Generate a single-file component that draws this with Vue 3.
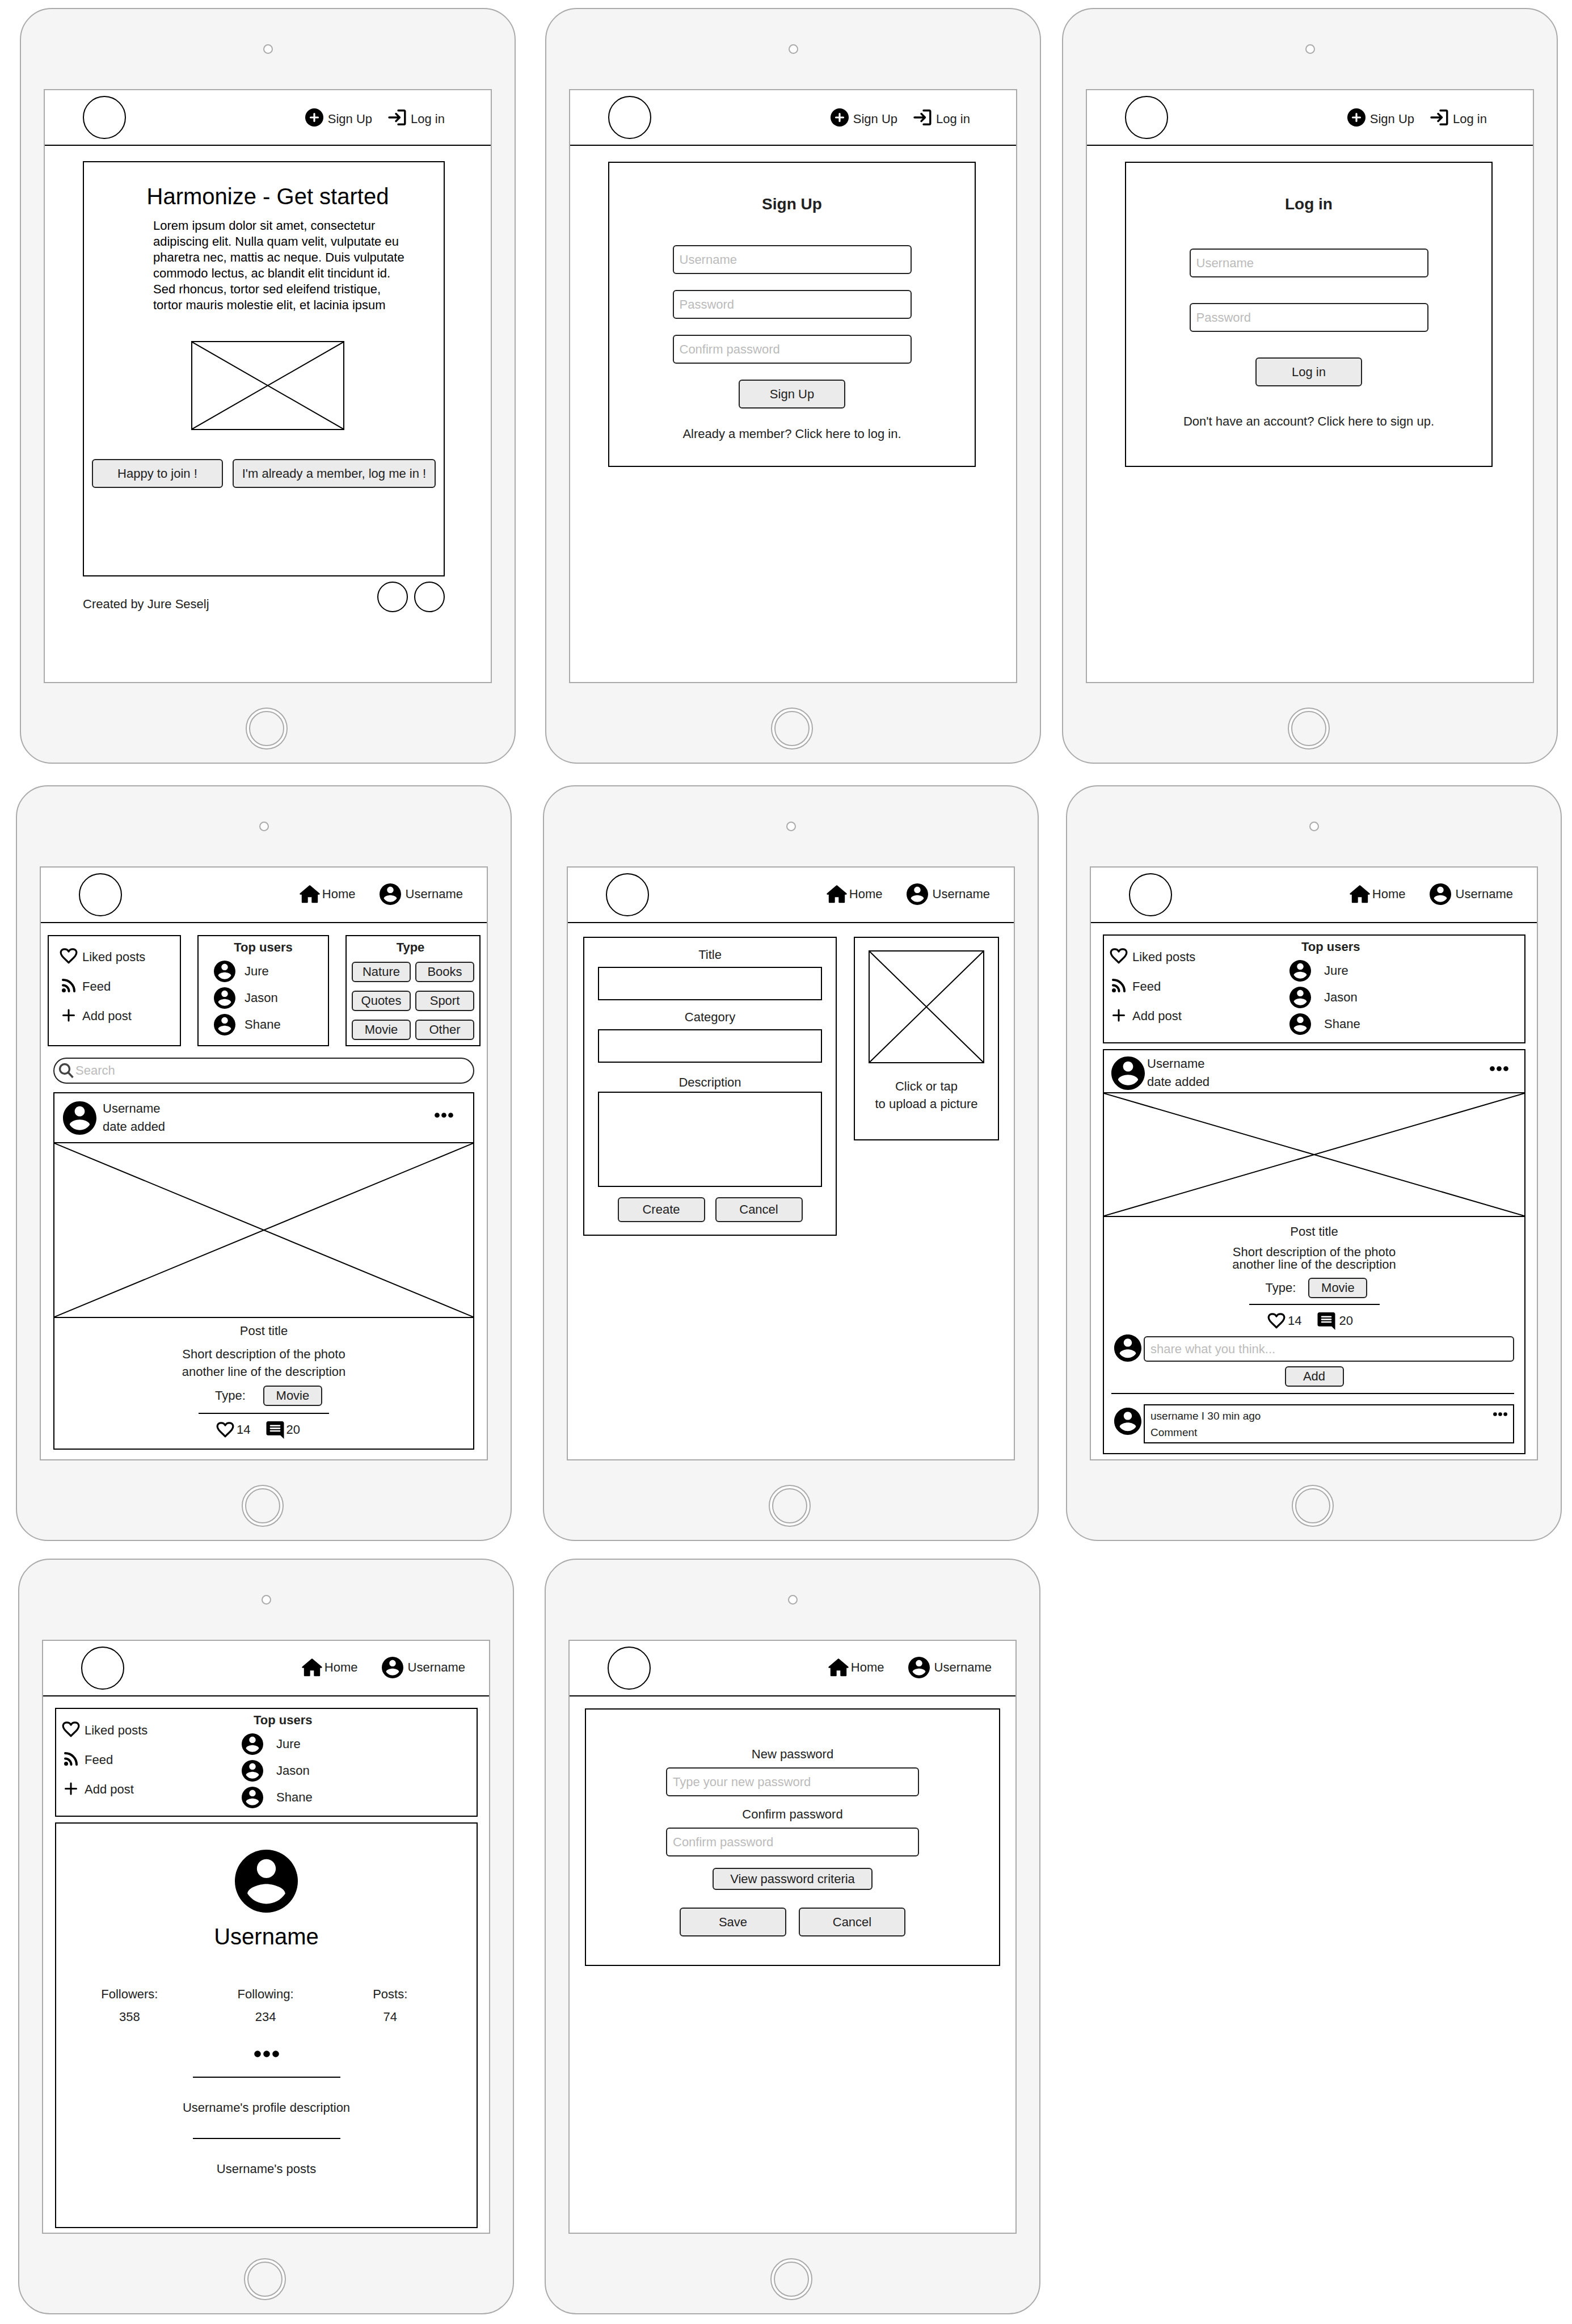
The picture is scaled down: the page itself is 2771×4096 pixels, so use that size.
<script setup>
const rows = [
  ['landing', 'signup', 'login'],
  ['feed', 'create', 'post'],
  ['profile', 'password'],
]

const guestScreens = ['landing', 'signup', 'login']
const menu = [
  { icon: 'heart', label: 'Liked posts' },
  { icon: 'feed', label: 'Feed' },
  { icon: 'plus', label: 'Add post' },
]
const topUsers = ['Jure', 'Jason', 'Shane']
const types = ['Nature', 'Books', 'Quotes', 'Sport', 'Movie', 'Other']
const signupFields = [
  { label: 'Username', type: 'text' },
  { label: 'Password', type: 'password' },
  { label: 'Confirm password', type: 'password' },
]
const loginFields = signupFields.slice(0, 2)
const stats = [
  { label: 'Followers:', value: '358' },
  { label: 'Following:', value: '234' },
  { label: 'Posts:', value: '74' },
]
</script>

<template>
  <svg class="symbols" aria-hidden="true">
    <symbol id="i-add" viewBox="0 0 32 32">
      <circle cx="16" cy="16" r="16" fill="#000" />
      <path d="M16 9.5v13M9.5 16h13" stroke="#fff" stroke-width="3.2" stroke-linecap="round" />
    </symbol>
    <symbol id="i-login" viewBox="0 0 32 28">
      <path d="M2 14h18M14 7.5l6.5 6.5-6.5 6.500M18 1.800h10q1.800 0 1.800 1.800v20.800q0 1.800-1.800 1.800h-10" fill="none" stroke="#000" stroke-width="3.400" stroke-linecap="round" stroke-linejoin="round" />
    </symbol>
    <symbol id="i-home" viewBox="0 0 36 32">
      <path d="M18 1.500L34.500 15.500H31V30H22.500V20H13.500V30H5V15.500H1.500Z" fill="#000" stroke="#000" stroke-width="2.400" stroke-linejoin="round" />
    </symbol>
    <symbol id="i-user" viewBox="2 2 20 20">
      <path d="M12 2C6.480 2 2 6.480 2 12s4.480 10 10 10 10-4.480 10-10S17.520 2 12 2zm0 3c1.660 0 3 1.340 3 3s-1.340 3-3 3-3-1.340-3-3 1.340-3 3-3zm0 14.200c-2.500 0-4.710-1.280-6-3.220.03-1.990 4-3.080 6-3.080 1.990 0 5.970 1.090 6 3.080-1.290 1.940-3.500 3.220-6 3.220z" />
    </symbol>
    <symbol id="i-heart" viewBox="0 0 32 28">
      <path d="M16 25.800C12.500 21.500 8 18.500 4.500 14C0 8 2.500 1.800 8.800 1.800C12.300 1.800 14.800 3.600 16 6.200C17.200 3.600 19.700 1.800 23.200 1.800C29.500 1.800 32 8 27.500 14C24 18.500 19.500 21.500 16 25.800Z" fill="none" stroke="#000" stroke-width="3.200" stroke-linejoin="round" />
    </symbol>
    <symbol id="i-feed" viewBox="0 0 32 28">
      <circle cx="7.500" cy="22.500" r="3.500" />
      <path d="M6 13.500A10.500 10.500 0 0 1 16.500 24M6 4A20 20 0 0 1 26 24" fill="none" stroke="#000" stroke-width="4" stroke-linecap="round" />
    </symbol>
    <symbol id="i-plus" viewBox="0 0 32 28">
      <path d="M16 5v19M6.500 14.500h19" stroke="#000" stroke-width="3" stroke-linecap="round" />
    </symbol>
    <symbol id="i-comment" viewBox="2 2 20 20">
      <path d="M21.990 4c0-1.100-.89-2-1.990-2H4c-1.100 0-2 .9-2 2v12c0 1.100.9 2 2 2h14l4 4-.01-18z" />
      <path d="M6.800 7h10.400M6.800 10h10.400M6.800 13h10.400" stroke="#fff" stroke-width="1.700" stroke-linecap="round" />
    </symbol>
    <symbol id="i-search" viewBox="0 0 28 28">
      <path d="M11 2.500a8.500 8.500 0 1 0 0 17a8.500 8.500 0 1 0 0-17M17.500 17.500L25.500 26" fill="none" stroke="#444" stroke-width="3.400" />
    </symbol>
    <symbol id="i-dots" viewBox="0 0 44 12">
      <circle cx="6" cy="6" r="5.800" /><circle cx="22" cy="6" r="5.800" /><circle cx="38" cy="6" r="5.800" />
    </symbol>
  </svg>

  <main class="board">
    <section v-for="(row, r) in rows" :key="r" class="row" :class="`row-${r + 1}`">
      <article v-for="name in row" :key="name" class="device">
        <div class="bezel-top"><span class="camera"></span></div>

        <div class="screen">
          <header class="bar">
            <a href="#" class="logo" aria-label="Start"></a>
            <nav v-if="guestScreens.includes(name)" class="nav guest">
              <a href="#"><svg class="ic-add"><use href="#i-add" /></svg><span>Sign Up</span></a>
              <a href="#"><svg class="ic-login"><use href="#i-login" /></svg><span>Log in</span></a>
            </nav>
            <nav v-else class="nav member">
              <a href="#" class="home"><svg class="ic-home"><use href="#i-home" /></svg><span>Home</span></a>
              <a href="#" class="me"><svg class="ic-me"><use href="#i-user" /></svg><span>Username</span></a>
            </nav>
          </header>

          <!-- Landing -->
          <div v-if="name === 'landing'" class="content landing">
            <section class="frame hero">
              <div class="intro">
                <h1>Harmonize - Get started</h1>
                <p class="lorem">
                  Lorem ipsum dolor sit amet, consectetur adipiscing elit. Nulla quam velit, vulputate eu
                  pharetra nec, mattis ac neque. Duis vulputate commodo lectus, ac blandit elit tincidunt id.
                  Sed rhoncus, tortor sed eleifend tristique, tortor mauris molestie elit, et lacinia ipsum
                </p>
                <svg class="picture hero-picture" viewBox="0 0 100 100" preserveAspectRatio="none">
                  <path d="M0 0L100 100M100 0L0 100" />
                </svg>
              </div>
              <div class="hero-actions">
                <button type="button" class="btn join">Happy to join !</button>
                <button type="button" class="btn back">I'm already a member, log me in !</button>
              </div>
            </section>
            <footer class="foot">
              <span>Created by Jure Seselj</span>
              <div class="social"><a href="#" aria-label="Profile one"></a><a href="#" aria-label="Profile two"></a></div>
            </footer>
          </div>

          <!-- Sign up -->
          <div v-else-if="name === 'signup'" class="content auth">
            <form class="frame auth-form signup-form" @submit.prevent>
              <h2>Sign Up</h2>
              <input v-for="f in signupFields" :key="f.label" class="field" :type="f.type" :placeholder="f.label" :aria-label="f.label" />
              <button class="btn wide">Sign Up</button>
              <a href="#" class="hint">Already a member? Click here to log in.</a>
            </form>
          </div>

          <!-- Log in -->
          <div v-else-if="name === 'login'" class="content auth">
            <form class="frame auth-form login-form" @submit.prevent>
              <h2>Log in</h2>
              <input v-for="f in loginFields" :key="f.label" class="field" :type="f.type" :placeholder="f.label" :aria-label="f.label" />
              <button class="btn wide">Log in</button>
              <a href="#" class="hint">Don't have an account? Click here to sign up.</a>
            </form>
          </div>

          <!-- Feed -->
          <div v-else-if="name === 'feed'" class="content feed">
            <div class="cards">
              <ul class="frame menu">
                <li v-for="m in menu" :key="m.label">
                  <a href="#"><svg class="ic-menu"><use :href="`#i-${m.icon}`" /></svg><span>{{ m.label }}</span></a>
                </li>
              </ul>
              <section class="frame users">
                <h3>Top users</h3>
                <a v-for="u in topUsers" :key="u" href="#" class="user"><svg class="ic-user"><use href="#i-user" /></svg>{{ u }}</a>
              </section>
              <section class="frame types">
                <h3>Type</h3>
                <div class="type-grid">
                  <button v-for="t in types" :key="t" type="button" class="btn chip">{{ t }}</button>
                </div>
              </section>
            </div>
            <label class="search">
              <svg class="ic-search"><use href="#i-search" /></svg>
              <input type="search" placeholder="Search" aria-label="Search" />
            </label>
            <article class="frame post">
              <header class="post-head">
                <svg class="ic-author"><use href="#i-user" /></svg>
                <p>Username<br />date added</p>
                <button type="button" class="more" aria-label="More"><svg class="ic-dots"><use href="#i-dots" /></svg></button>
              </header>
              <svg class="picture post-picture" viewBox="0 0 100 100" preserveAspectRatio="none"><path d="M0 0L100 100M100 0L0 100" /></svg>
              <div class="post-body">
                <h4>Post title</h4>
                <p class="desc">Short description of the photo<br />another line of the description</p>
                <div class="type-row"><span>Type:</span><button type="button" class="btn chip">Movie</button></div>
                <hr class="rule" />
                <div class="reactions">
                  <span><svg class="ic-heart"><use href="#i-heart" /></svg>14</span>
                  <span><svg class="ic-comment"><use href="#i-comment" /></svg>20</span>
                </div>
              </div>
            </article>
          </div>

          <!-- Create post -->
          <div v-else-if="name === 'create'" class="content create">
            <form class="frame create-form" @submit.prevent>
              <label for="post-title">Title</label>
              <input id="post-title" class="plain" type="text" />
              <label for="post-category">Category</label>
              <input id="post-category" class="plain" type="text" />
              <label for="post-description">Description</label>
              <textarea id="post-description" class="plain"></textarea>
              <div class="create-actions">
                <button class="btn">Create</button>
                <button type="button" class="btn">Cancel</button>
              </div>
            </form>
            <section class="frame upload">
              <svg class="picture upload-picture" viewBox="0 0 100 100" preserveAspectRatio="none"><path d="M0 0L100 100M100 0L0 100" /></svg>
              <p>Click or tap<br />to upload a picture</p>
            </section>
          </div>

          <!-- Change password -->
          <div v-else-if="name === 'password'" class="content pass">
            <form class="frame pass-form" @submit.prevent>
              <label for="new-pass">New password</label>
              <input id="new-pass" class="field" type="password" placeholder="Type your new password" />
              <label for="confirm-pass">Confirm password</label>
              <input id="confirm-pass" class="field" type="password" placeholder="Confirm password" />
              <button type="button" class="btn criteria">View password criteria</button>
              <div class="pass-actions">
                <button class="btn wide">Save</button>
                <button type="button" class="btn wide">Cancel</button>
              </div>
            </form>
          </div>

          <!-- Single post and profile share the top panel -->
          <div v-else class="content detail">
            <div class="frame panel">
              <ul class="menu">
                <li v-for="m in menu" :key="m.label">
                  <a href="#"><svg class="ic-menu"><use :href="`#i-${m.icon}`" /></svg><span>{{ m.label }}</span></a>
                </li>
              </ul>
              <section class="users">
                <h3>Top users</h3>
                <a v-for="u in topUsers" :key="u" href="#" class="user"><svg class="ic-user"><use href="#i-user" /></svg>{{ u }}</a>
              </section>
            </div>

            <article v-if="name === 'post'" class="frame post single">
              <header class="post-head">
                <svg class="ic-author"><use href="#i-user" /></svg>
                <p>Username<br />date added</p>
                <button type="button" class="more" aria-label="More"><svg class="ic-dots"><use href="#i-dots" /></svg></button>
              </header>
              <svg class="picture post-picture" viewBox="0 0 100 100" preserveAspectRatio="none"><path d="M0 0L100 100M100 0L0 100" /></svg>
              <div class="post-body">
                <h4>Post title</h4>
                <p class="desc">Short description of the photo<br />another line of the description</p>
                <div class="type-row"><span>Type:</span><button type="button" class="btn chip">Movie</button></div>
                <hr class="rule" />
                <div class="reactions">
                  <span><svg class="ic-heart"><use href="#i-heart" /></svg>14</span>
                  <span><svg class="ic-comment"><use href="#i-comment" /></svg>20</span>
                </div>
              </div>
              <form class="reply" @submit.prevent>
                <div class="reply-row">
                  <svg class="ic-reply"><use href="#i-user" /></svg>
                  <input class="field" type="text" placeholder="share what you think..." aria-label="Comment" />
                </div>
                <button class="btn chip">Add</button>
              </form>
              <hr class="long-rule" />
              <div class="comment">
                <svg class="ic-reply"><use href="#i-user" /></svg>
                <div class="frame comment-box">
                  <p>username I 30 min ago<br />Comment</p>
                  <button type="button" class="more" aria-label="More"><svg class="ic-dots"><use href="#i-dots" /></svg></button>
                </div>
              </div>
            </article>

            <section v-else class="frame profile">
              <svg class="ic-profile"><use href="#i-user" /></svg>
              <h1>Username</h1>
              <dl class="stats">
                <div v-for="s in stats" :key="s.label"><dt>{{ s.label }}</dt><dd>{{ s.value }}</dd></div>
              </dl>
              <button type="button" class="more" aria-label="More"><svg class="ic-dots"><use href="#i-dots" /></svg></button>
              <hr />
              <p>Username's profile description</p>
              <hr />
              <p>Username's posts</p>
            </section>
          </div>
        </div>

        <div class="bezel-bottom"><button type="button" class="home-button" aria-label="Home button"><span></span></button></div>
      </article>
    </section>
  </main>
</template>

<style>
body {
  margin: 0;
  background: #fff;
}
</style>

<style scoped>
.board,
.board * {
  box-sizing: border-box;
}

.symbols {
  display: none;
}

.board {
  display: flex;
  flex-direction: column;
  padding: 14px 0 17px;
  font-family: "Liberation Sans", Arial, Helvetica, sans-serif;
  font-size: 22px;
  line-height: 28px;
  color: #222;
}

h1, h2, h3, h4, p, ul, dl, dd {
  margin: 0;
  padding: 0;
}

h1 {
  font-size: 40px;
  line-height: 44px;
  font-weight: 400;
  color: #000;
}

h2 {
  font-size: 28px;
  line-height: 32px;
}

h3 {
  font-size: 22px;
}

h4 {
  font-size: 22px;
  font-weight: 400;
}

ul {
  list-style: none;
}

a {
  color: inherit;
  text-decoration: none;
}

hr {
  margin: 0;
  border: 0;
  border-top: 2px solid #000;
}

svg {
  display: block;
  flex: none;
}

button,
input,
textarea {
  font: inherit;
  color: inherit;
}

/* Board rows */
.row {
  display: grid;
  align-items: start;
}

.row-1 {
  grid-template-columns: 1fr 52px 1fr 37px 1fr;
  padding: 0 25px 38px 35px;
}

.row-2 {
  grid-template-columns: 1fr 55px 1fr 48px 1fr;
  padding: 0 18px 31px 28px;
}

.row-3 {
  grid-template-columns: 1fr 54px 1fr 48px 1fr;
  padding: 0 15px 0 32px;
}

.device:nth-child(2) {
  grid-column: 3;
}

.device:nth-child(3) {
  grid-column: 5;
}

/* Tablet */
.device {
  min-width: 0;
  padding: 0 40px;
  border: 2px solid #aaa;
  border-radius: 56px;
  background: #f5f5f5;
}

.bezel-top {
  display: flex;
  align-items: center;
  justify-content: center;
  height: 141px;
}

.camera {
  width: 17px;
  height: 17px;
  border: 2px solid #aaa;
  border-radius: 50%;
  background: #fff;
}

.screen {
  aspect-ratio: 790 / 1047;
  border: 2px solid #aaa;
  background: #fff;
}

.bezel-bottom {
  display: flex;
  justify-content: center;
  height: 140px;
  padding: 43px 4px 0 0;
}

.home-button {
  width: 74px;
  height: 74px;
  padding: 4px;
  border: 2px solid #aaa;
  border-radius: 50%;
  background: #fff;
}

.home-button span {
  display: block;
  height: 100%;
  border: 2px solid #aaa;
  border-radius: 50%;
  background: #f5f5f5;
}

/* Top bar */
.bar {
  display: flex;
  align-items: center;
  justify-content: space-between;
  height: 98px;
  padding-left: 67px;
  border-bottom: 2px solid #000;
}

.logo {
  width: 76px;
  height: 76px;
  border: 2px solid #000;
  border-radius: 50%;
}

.nav,
.nav a {
  display: flex;
  align-items: center;
}

.guest {
  gap: 28px;
  padding-right: 81px;
}

.guest a {
  gap: 8px;
}

.guest span {
  padding-top: 5px;
}

.member {
  gap: 42px;
  padding: 0 42px 3px 0;
}

.home {
  gap: 4px;
}

.me {
  gap: 8px;
}

.ic-add {
  width: 32px;
  height: 32px;
}

.ic-login {
  width: 32px;
  height: 28px;
}

.ic-home {
  width: 36px;
  height: 32px;
}

.ic-me,
.ic-user {
  width: 38px;
  height: 38px;
}

/* Shared pieces */
.frame {
  border: 2px solid #000;
}

.btn {
  height: 51px;
  padding: 0;
  border: 2px solid #222;
  border-radius: 6px;
  background: #ebebeb;
}

.wide {
  width: 188px;
}

.chip {
  width: 104px;
  height: 36px;
}

.field {
  height: 51px;
  padding: 0 10px;
  border: 2px solid #222;
  border-radius: 6px;
  background: #fff;
}

.field::placeholder,
.search input::placeholder {
  color: #bbb;
  opacity: 1;
}

.picture {
  border: 2px solid #000;
}

.picture path {
  fill: none;
  stroke: #000;
  stroke-width: 2px;
  vector-effect: non-scaling-stroke;
}

.more {
  padding: 0;
  border: 0;
  background: none;
}

/* Landing */
.landing {
  padding: 27px 81px 0 67px;
}

.hero {
  padding: 38px 14px 154px;
}

.intro {
  display: flex;
  flex-direction: column;
  align-items: center;
  padding-left: 14px;
}

.lorem {
  align-self: flex-start;
  width: 450px;
  margin: 16px 0 49px 94px;
  color: #000;
}

.hero-picture {
  width: 270px;
  height: 157px;
}

.hero-actions {
  display: flex;
  gap: 17px;
  margin-top: 51px;
}

.join {
  flex: 230;
}

.back {
  flex: 359;
}

.foot {
  display: flex;
  align-items: flex-end;
  justify-content: space-between;
  padding-top: 9px;
}

.social {
  display: flex;
  gap: 11px;
}

.social a {
  width: 54px;
  height: 54px;
  border: 2px solid #000;
  border-radius: 50%;
}

/* Sign up and log in */
.auth {
  padding: 28px 71px 0 67px;
}

.auth-form {
  display: flex;
  flex-direction: column;
  align-items: center;
  padding-top: 57px;
}

.auth-form .field {
  width: 421px;
}

.hint {
  margin-top: 3px;
}

.signup-form {
  gap: 28px;
  padding-bottom: 42px;
}

.signup-form h2 {
  margin-bottom: 28px;
}

.login-form {
  gap: 45px;
  padding-bottom: 64px;
}

.login-form h2 {
  margin-bottom: 17px;
}

/* Menu and top users */
.menu li + li {
  margin-top: 20px;
}

.menu a {
  display: flex;
  align-items: center;
  gap: 8px;
}

.menu span {
  padding-top: 4px;
}

.ic-menu {
  width: 32px;
  height: 28px;
}

.users {
  display: flex;
  flex-direction: column;
  gap: 9px;
  padding-top: 6px;
}

.user {
  display: flex;
  align-items: center;
  gap: 16px;
}

/* Feed */
.feed {
  padding: 21px 11px 0 12px;
}

.cards {
  display: grid;
  grid-template-columns: 235fr 232fr 238fr;
  gap: 29px;
  height: 196px;
}

.cards .menu {
  padding: 19px 0 0 19px;
}

.cards .users {
  padding-left: 27px;
}

.cards .users h3 {
  padding-right: 27px;
  text-align: center;
}

.types {
  padding: 6px 9px 0;
}

.types h3 {
  padding-right: 9px;
  text-align: center;
}

.type-grid {
  display: grid;
  grid-template-columns: 1fr 1fr;
  gap: 15px 8px;
  margin-top: 11px;
}

.type-grid .chip {
  width: auto;
}

.search {
  display: flex;
  align-items: center;
  gap: 2px;
  height: 46px;
  margin: 20px 11px 15px 10px;
  padding-left: 7px;
  border: 2px solid #222;
  border-radius: 23px;
}

.search input {
  flex: 1;
  min-width: 0;
  padding: 0;
  border: 0;
  outline: 0;
  background: none;
}

.ic-search {
  width: 28px;
  height: 28px;
}

/* Post */
.feed .post {
  margin: 0 11px 0 10px;
  padding-bottom: 17px;
}

.post-head {
  display: flex;
  align-items: center;
  height: 86px;
  padding: 0 35px 0 15px;
}

.post-head p {
  margin-left: 11px;
  line-height: 32px;
}

.post-head .more {
  margin: 0 0 10px auto;
}

.ic-author {
  width: 59px;
  height: 59px;
}

.ic-dots {
  width: 33px;
  height: 9px;
}

.post-picture {
  width: 100%;
  height: 310px;
  border-width: 2px 0;
}

.post-body {
  display: flex;
  flex-direction: column;
  align-items: center;
  padding-top: 9px;
}

.desc {
  margin: 11px 0 9px;
  line-height: 31px;
  text-align: center;
}

.type-row {
  display: flex;
  align-items: center;
  gap: 31px;
  padding-left: 17px;
}

.rule {
  width: 230px;
  margin: 12px 0;
}

.reactions {
  display: flex;
  gap: 27px;
  padding-right: 20px;
}

.reactions span {
  display: flex;
  align-items: center;
  gap: 4px;
  height: 32px;
}

.ic-heart {
  width: 32px;
  height: 28px;
}

.ic-comment {
  width: 32px;
  height: 31px;
}

/* Create post */
.create {
  display: grid;
  grid-template-columns: 447fr 256fr;
  align-items: start;
  gap: 30px;
  padding: 24px 26px 0 27px;
}

.create-form {
  display: flex;
  flex-direction: column;
  padding: 16px 24px 22px;
  text-align: center;
}

.plain {
  height: 59px;
  padding: 0 10px;
  border: 2px solid #000;
  border-radius: 0;
  background: #fff;
}

input.plain {
  margin: 7px 0 16px;
}

input.plain + label[for="post-description"] {
  margin-top: 5px;
}

textarea.plain {
  height: 168px;
  margin-top: 2px;
  resize: none;
}

.create-actions {
  display: flex;
  justify-content: center;
  gap: 18px;
  margin-top: 18px;
}

.create-actions .btn {
  width: 154px;
  height: 44px;
}

.upload {
  padding: 22px 24px 47px;
  line-height: 31px;
  text-align: center;
}

.upload-picture {
  width: 100%;
  height: 199px;
  margin-bottom: 25px;
}

/* Single post and profile */
.detail {
  padding: 20px 20px 0 21px;
}

.panel {
  display: flex;
  height: 192px;
}

.panel .menu {
  flex: 0 1 327px;
  padding: 20px 0 0 10px;
}

.panel .users h3 {
  padding-left: 21px;
}

.panel .user {
  gap: 23px;
}

.single {
  margin-top: 10px;
  padding-bottom: 17px;
}

.single .post-head {
  height: 74px;
  padding: 6px 28px 0 13px;
}

.single .post-head p {
  margin-left: 4px;
}

.single .post-head .more {
  margin-bottom: 16px;
}

.single .post-picture {
  height: 220px;
}

.single .post-body {
  padding-top: 12px;
}

.single .desc {
  margin-bottom: 12px;
  line-height: 22px;
}

.single .type-row {
  gap: 22px;
  padding-left: 8px;
}

.single .rule {
  margin: 10px 0 12px;
}

.single .reactions {
  padding-right: 14px;
}

.single .reactions span:last-child {
  gap: 7px;
}

.reply {
  display: flex;
  flex-direction: column;
  align-items: center;
  gap: 8px;
  padding-top: 8px;
}

.reply-row {
  display: flex;
  align-items: flex-end;
  align-self: stretch;
  gap: 4px;
  padding: 0 18px;
}

.reply-row .field {
  flex: 1;
  min-width: 0;
  height: 45px;
}

.ic-reply {
  width: 48px;
  height: 48px;
}

.long-rule {
  margin: 11px 18px 18px 13px;
}

.comment {
  display: flex;
  align-items: flex-start;
  gap: 4px;
  padding: 0 18px;
}

.comment .ic-reply {
  margin-top: 6px;
}

.comment-box {
  display: flex;
  flex: 1;
  align-items: flex-start;
  justify-content: space-between;
  height: 69px;
  padding: 4px 10px 0;
  font-size: 19px;
  line-height: 29px;
}

.comment-box .ic-dots {
  width: 25px;
  height: 7px;
  margin-top: 8px;
}

.profile {
  display: flex;
  flex-direction: column;
  align-items: center;
  margin-top: 10px;
  padding: 46px 0 88px;
}

.ic-profile {
  width: 111px;
  height: 111px;
  margin-bottom: 20px;
}

.stats {
  display: grid;
  grid-template-columns: 238fr 240fr 198fr;
  align-self: stretch;
  margin: 66px 0 45px;
  padding: 0 53px 0 10px;
  text-align: center;
}

.stats dd {
  margin-top: 12px;
}

.profile .ic-dots {
  width: 44px;
  height: 12px;
}

.profile hr {
  width: 260px;
  margin: 39px 0;
}

.profile .more + hr {
  margin-top: 34px;
}

/* Change password */
.pass {
  padding: 21px 27px 0;
}

.pass-form {
  display: flex;
  flex-direction: column;
  align-items: center;
  padding: 65px 0 50px;
}

.pass-form .field {
  width: 446px;
  margin: 9px 0 18px;
}

.criteria {
  width: 282px;
  height: 39px;
  margin-top: 2px;
}

.pass-actions {
  display: flex;
  gap: 22px;
  margin-top: 31px;
}
</style>
